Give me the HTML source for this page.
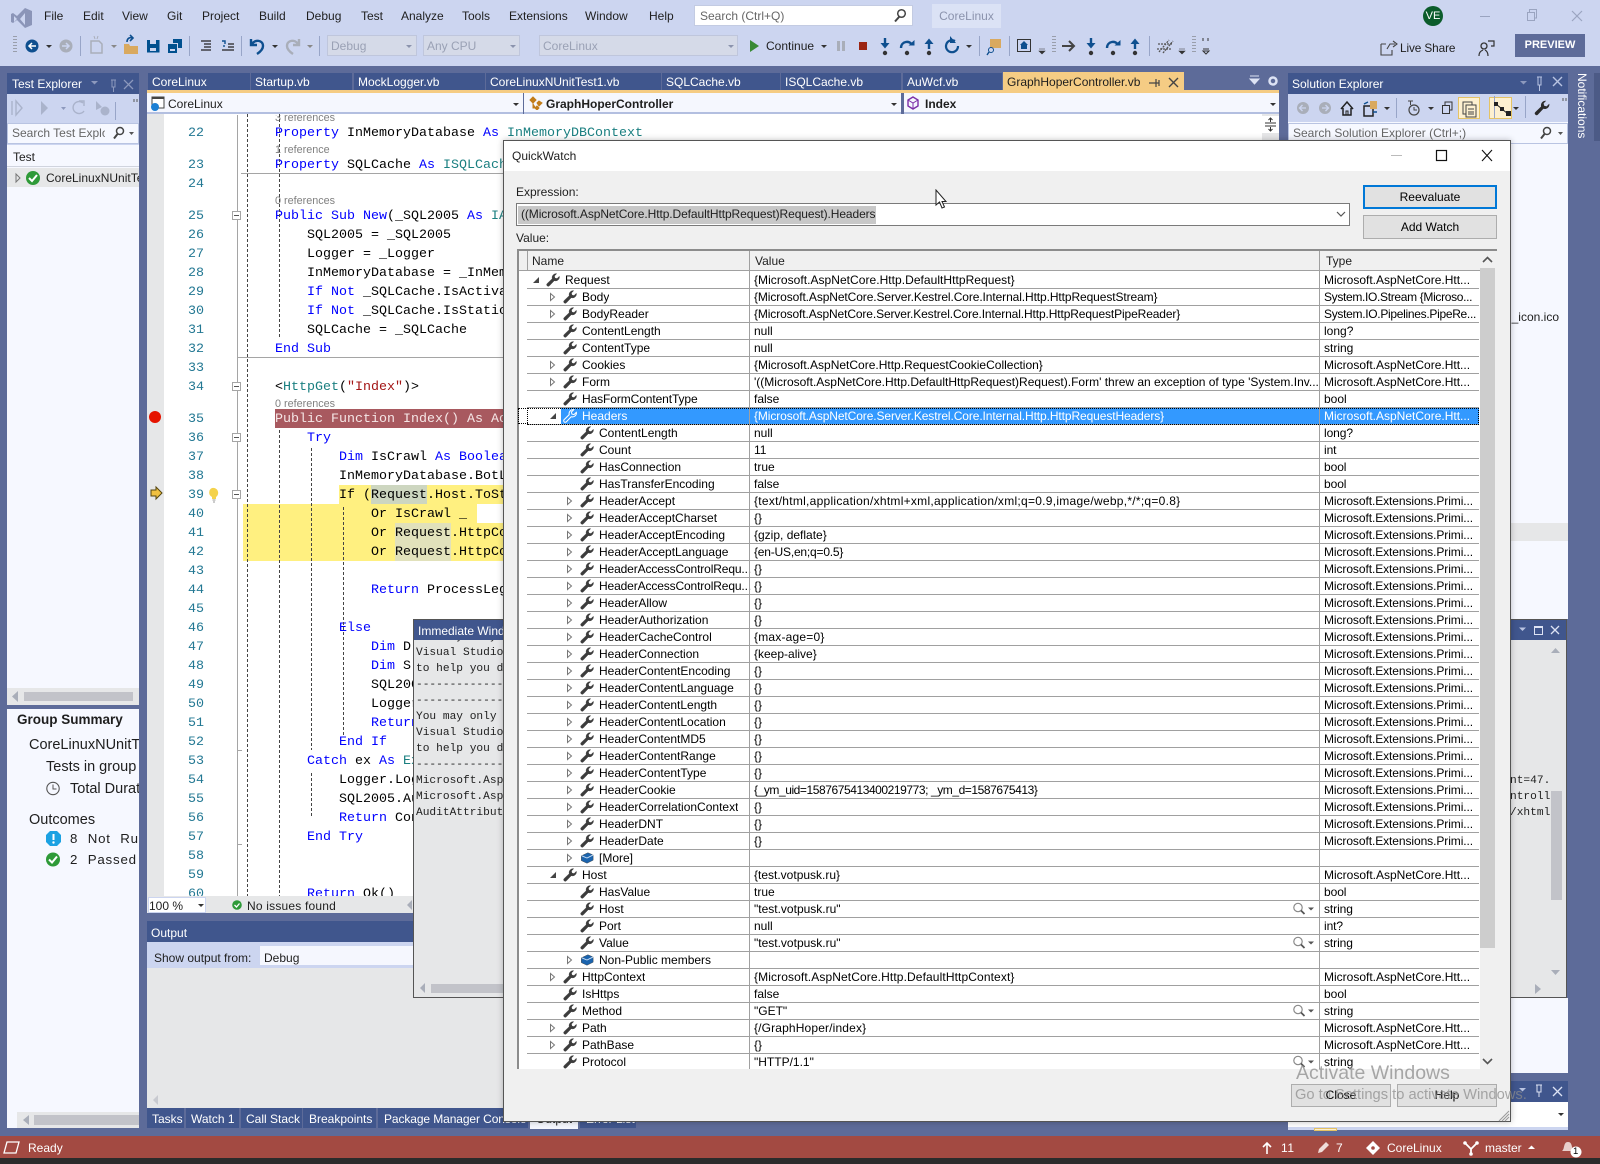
<!DOCTYPE html>
<html><head><meta charset="utf-8"><title>QuickWatch</title>
<style>
html,body{margin:0;padding:0;width:1600px;height:1164px;overflow:hidden;background:#5d6b99}
body{position:relative;font:12px/16px "Liberation Sans",sans-serif;color:#1e1e1e}
.a{position:absolute;white-space:nowrap}
.b{position:absolute}
.w1{color:#fff}
.dn{position:absolute;width:0;height:0;border-left:3px solid transparent;border-right:3px solid transparent;border-top:3px solid #333}
.tab{position:absolute;top:73px;height:17px;background:#40568d;color:#fff;line-height:18px;white-space:nowrap;overflow:hidden}
.ln,.c{position:absolute;font:13.33px/19px "Liberation Mono",monospace;white-space:pre}
.ln{left:164px;width:40px;text-align:right;color:#237893;margin-top:2px}
.c{color:#000;margin-top:2px}
.k{color:#0000ff}.y{color:#1a7f80}.s{color:#a31515}
.cl{position:absolute;font-size:10.8px;line-height:12px;color:#808080;white-space:nowrap;margin-top:1px}
.im{position:absolute;left:416px;font:11.2px/16px "Liberation Mono",monospace;white-space:pre;color:#1e1e1e}
.bt{position:absolute;top:1108px;height:20px;background:#40568d;color:#fff;line-height:23px;white-space:nowrap;overflow:hidden;box-sizing:border-box;padding-left:6px}
.r{position:relative;height:16px;border-bottom:1px solid #a0a0a0;line-height:16px;color:#000}
.d0{--o:0px}.d1{--o:17px}.d2{--o:34px}
.r span{position:absolute;top:0;white-space:nowrap;overflow:hidden}
.n{left:calc(38px + var(--o))}
.v{left:227px;width:564px}
.t{left:797px;width:155px}
.d2 .t{letter-spacing:-.08px}
.lg{letter-spacing:-.13px}
.r svg{position:absolute}
.e{left:calc(5px + var(--o));top:0;width:8px;height:16px}
.w{left:calc(19px + var(--o));top:1px;width:14px;height:14px;fill:#3c3c3c;stroke:#3c3c3c;stroke-width:.5}
.m{left:765px;top:1px;width:24px;height:14px}
.sel{background:linear-gradient(90deg,#fff 0,#fff calc(17px + var(--o)),#3399ff calc(17px + var(--o)));color:#fff;outline:1px dotted #000;outline-offset:-1px}
.sel .w{fill:#3399ff;stroke:#fff;stroke-width:1.2}
.btn{position:absolute;box-sizing:border-box;background:#e1e1e1;border:1px solid #adadad;text-align:center;color:#000}
</style></head>
<body>
<svg width="0" height="0" style="position:absolute">
<defs>
<symbol id="wr" viewBox="0 0 16 16"><path d="M15.4 4.4a4.6 4.6 0 0 1-6 4.4L3.9 14.6a1.8 1.8 0 0 1-2.6-2.5l5.8-5.6A4.6 4.6 0 0 1 12.2.8L9.6 3.4l.6 2.4 2.4.6 2.6-2.6z"/></symbol>
<symbol id="ac" viewBox="0 0 8 16"><path d="M1.5 4.5l4 3.5-4 3.5z" fill="#fff" stroke="#777"/></symbol>
<symbol id="ae" viewBox="0 0 8 16"><path d="M7 5v6H1z" fill="#444"/></symbol>
<symbol id="cb" viewBox="0 0 16 16"><path d="M1.5 5.500L9 2l6 2.500v6L8 14l-6.500-3z" fill="#1b64ae"/><path d="M2 5.500l6 2.500 7-3.500" fill="none" stroke="#cfe2f7" stroke-width="1"/></symbol>
<symbol id="mg" viewBox="0 0 24 14"><circle cx="6" cy="5.500" r="4.200" fill="#fff" stroke="#8a8a8a" stroke-width="1.200"/><path d="M9 8.500l3.500 3.500" stroke="#555" stroke-width="1.800"/><path d="M16 5.500h6l-3 3z" fill="#555"/></symbol>
<symbol id="si" viewBox="0 0 16 20"><path d="M8 0v8" stroke="#0e4f8f" stroke-width="2.400"/><path d="M3.500 5h9L8 10.500z" fill="#0e4f8f"/><circle cx="8" cy="15" r="2.200" fill="#333"/></symbol>
<symbol id="so" viewBox="0 0 16 20"><path d="M2 10C2 3 11 2 13 7" fill="none" stroke="#0e4f8f" stroke-width="2.400"/><path d="M9.500 7.500h6V2z" fill="#0e4f8f"/><circle cx="8" cy="15" r="2.200" fill="#333"/></symbol>
<symbol id="su" viewBox="0 0 16 20"><path d="M8 11V3" stroke="#0e4f8f" stroke-width="2.400"/><path d="M3.500 6h9L8 .5z" fill="#0e4f8f"/><circle cx="8" cy="15" r="2.200" fill="#333"/></symbol>
</defs>
</svg>

<!-- top chrome -->
<div class="b" style="left:0;top:0;width:1600px;height:66px;background:#ccd5f0"></div>
<svg class="b" style="left:0;top:0" width="1600" height="66">
<path d="M25 8l7 3v14l-7 3-8-8-4 3-2-1V14l2-1 4 3zM14 16v6l3-3zM25 13l-5 6 5 6z" fill="#8b95b8" fill-rule="evenodd"/>
<path d="M14 36v18M16 36v18" stroke="#666" stroke-dasharray="1 2"/>
<circle cx="32" cy="46" r="6.500" fill="#0e4f8f"/><path d="M36 46h-6M32 43l-3 3 3 3" stroke="#fff" stroke-width="1.500" fill="none"/>
<path d="M46 45h6l-3 3z" fill="#333"/>
<circle cx="66" cy="46" r="6.500" fill="#a9aeb9"/><path d="M62 46h6M66 43l3 3-3 3" stroke="#ccd5f0" stroke-width="1.500" fill="none"/>
<path d="M80.500 36v20M189.500 36v20M241.500 36v20M319.500 36v20M979.500 36v20M1009.500 36v20M1149.500 36v20" stroke="#98a5c8"/>
<path d="M91 41h8l3 3v9H91z" fill="none" stroke="#a9aeb9" stroke-width="1.500"/><path d="M94 36l1 3M98 36l-1 3" stroke="#a9aeb9"/>
<path d="M111 45h6l-3 3z" fill="#888"/>
<path d="M124 44h5l1 2h8v8h-14z" fill="#d9a95f"/><path d="M127 42c0-4 3-5 6-4M130 35l3 3-3 3" fill="none" stroke="#0e4f8f" stroke-width="1.600"/>
<path d="M147 40h12.500v12.500H147zM150 40v4h6v-4z" fill="#00508f" fill-rule="evenodd"/><rect x="150" y="48" width="6" height="3" fill="#ccd5f0"/>
<path d="M168 44h9v9h-9z" fill="#00508f"/><path d="M173 39h9v9h-4v-5h-5z" fill="#00508f"/><rect x="170" y="49" width="5" height="2" fill="#ccd5f0"/>
<path d="M201 41h10M204 44h7M204 47h7M201 50h10" stroke="#222" stroke-width="1.200"/>
<path d="M222 41h3v3M224 45v2" stroke="#0e4f8f" stroke-width="1.400" fill="none"/><path d="M228 44h6M228 47h6M222 50h12" stroke="#222" stroke-width="1.200"/>
<path d="M251 39v6h6M252 44c3-5 11-4 11 2 0 3-3 6-6 8" fill="none" stroke="#0e4f8f" stroke-width="2.400"/>
<path d="M272 45h6l-3 3z" fill="#333"/>
<path d="M299 39v6h-6M298 44c-3-5-11-4-11 2 0 3 3 6 6 8" fill="none" stroke="#a9aeb9" stroke-width="2.400"/>
<path d="M307 45h6l-3 3z" fill="#888"/>
<path d="M750 40l9 6-9 6z" fill="#388a34"/>
<path d="M821 45h6l-3 3z" fill="#333"/>
<rect x="837" y="41" width="3" height="10" fill="#a9aeb9"/><rect x="842" y="41" width="3" height="10" fill="#a9aeb9"/>
<rect x="859" y="42" width="8" height="8" fill="#9b2412"/>
<use href="#si" x="877" y="38" width="16" height="20"/><use href="#so" x="899" y="38" width="16" height="20"/><use href="#su" x="921" y="38" width="16" height="20"/>
<path d="M955 41a6 6 0 1 0 3 5" fill="none" stroke="#0e4f8f" stroke-width="2.200"/><path d="M950 36v7h6z" fill="#0e4f8f"/>
<path d="M966 45h6l-3 3z" fill="#333"/>
<rect x="990" y="39" width="11" height="9" fill="#d9a95f"/><circle cx="991" cy="50" r="2.500" fill="#ccd5f0" stroke="#0e4f8f"/><path d="M989 52l-2 3" stroke="#0e4f8f" stroke-width="1.400"/>
<rect x="1017.500" y="39.500" width="13" height="12" fill="none" stroke="#333"/><path d="M1024 41l4 4h-1v4h-6v-4h-1z" fill="#0e4f8f"/>
<path d="M1039 49h6M1039 51h6l-3 3z" stroke="#333" fill="#333" stroke-width=".6"/>
<path d="M1053 36v16M1055 36v16" stroke="#666" stroke-dasharray="1 2"/>
<path d="M1062 46h12M1069 41l5 5-5 5" fill="none" stroke="#444" stroke-width="2"/>
<use href="#si" x="1083" y="38" width="16" height="20"/><use href="#so" x="1105" y="38" width="16" height="20"/><use href="#su" x="1127" y="38" width="16" height="20"/>
<path d="M1159 52l10-12M1163 53l10-12M1158 44h14M1157 49h14" stroke="#555" stroke-width="1.300" stroke-dasharray="2 1"/>
<path d="M1179 49h6M1179 51h6l-3 3z" stroke="#333" fill="#333" stroke-width=".6"/>
<path d="M1193 36v16M1195 36v16" stroke="#666" stroke-dasharray="1 2"/>
<path d="M1203 38v3M1208 38v3M1203 49h6M1203 51h6l-3 3z" stroke="#333" fill="none"/>
<path d="M893 17a4.200 4.200 0 1 0 3-7 4.200 4.200 0 0 0-3 7l-2 3 1 1z M902 13.500a4.300 4.300 0 1 1-8.600 0" fill="none" stroke="#444" stroke-width="1.500" transform="translate(0 -1)"/>
<rect x="1480" y="16" width="10" height="1" fill="#9aa4c0"/>
<rect x="1527.500" y="12.500" width="7" height="8" fill="none" stroke="#9aa4c0"/><path d="M1529.500 12v-2.500h7V18h-2" fill="none" stroke="#9aa4c0"/>
<path d="M1572 11l10 10M1582 11l-10 10" stroke="#9aa4c0" stroke-width="1.200"/>
<path d="M1381 44h5M1381 44v11h11v-5M1387 49l3-5h5M1393 41l4 3-4 3" fill="none" stroke="#444" stroke-width="1.100"/>
<circle cx="1484" cy="46" r="3" fill="none" stroke="#333" stroke-width="1.300"/><path d="M1479 56c0-4 2-5 4-6M1488 56c0-3-1-5-3-6M1488 41h6v5h-3" fill="none" stroke="#333" stroke-width="1.200"/>
</svg>
<div class="a" style="left:44px;top:8px">File</div><div class="a" style="left:83px;top:8px">Edit</div><div class="a" style="left:122px;top:8px">View</div><div class="a" style="left:167px;top:8px">Git</div><div class="a" style="left:202px;top:8px">Project</div><div class="a" style="left:259px;top:8px">Build</div><div class="a" style="left:306px;top:8px">Debug</div><div class="a" style="left:361px;top:8px">Test</div><div class="a" style="left:401px;top:8px">Analyze</div><div class="a" style="left:462px;top:8px">Tools</div><div class="a" style="left:509px;top:8px">Extensions</div><div class="a" style="left:585px;top:8px">Window</div><div class="a" style="left:649px;top:8px">Help</div>
<div class="b" style="left:694px;top:5px;width:219px;height:21px;background:#fff;border:1px solid #c3cbe2;box-sizing:border-box"></div>
<div class="a" style="left:700px;top:8px;color:#666">Search (Ctrl+Q)</div>
<svg class="b" style="left:893px;top:8px" width="14" height="15"><circle cx="8.500" cy="5.500" r="3.800" fill="none" stroke="#444" stroke-width="1.500"/><path d="M6 9l-4 4.500" stroke="#444" stroke-width="2"/></svg>
<div class="a" style="left:932px;top:4px;width:69px;height:24px;background:#dbe2f5;color:#8b93ad;line-height:24px;text-align:center">CoreLinux</div>
<div class="a w1" style="left:1423px;top:6px;width:20px;height:20px;border-radius:50%;background:#0b5c2b;line-height:20px;text-align:center;font-size:11px">VE</div>
<div class="b" style="left:327px;top:35px;width:90px;height:21px;background:#d5dae8;border:1px solid #bfc6dc;box-sizing:border-box"></div>
<div class="a" style="left:331px;top:38px;color:#9aa1b5">Debug</div><div class="dn" style="left:406px;top:45px;border-top-color:#8b93ad"></div>
<div class="b" style="left:423px;top:35px;width:97px;height:21px;background:#d5dae8;border:1px solid #bfc6dc;box-sizing:border-box"></div>
<div class="a" style="left:427px;top:38px;color:#9aa1b5">Any CPU</div><div class="dn" style="left:523px;top:45px;border-top-color:#8b93ad;margin-left:-13px"></div>
<div class="b" style="left:539px;top:35px;width:199px;height:21px;background:#d5dae8;border:1px solid #bfc6dc;box-sizing:border-box"></div>
<div class="a" style="left:543px;top:38px;color:#9aa1b5">CoreLinux</div><div class="dn" style="left:728px;top:45px;border-top-color:#8b93ad"></div>
<div class="a" style="left:766px;top:38px">Continue</div>
<div class="a" style="left:1400px;top:40px;letter-spacing:-.1px;font-size:11.800px">Live Share</div>
<div class="a w1" style="left:1515px;top:34px;width:70px;height:23px;background:#5d6b99;line-height:23px;text-align:center;font-weight:bold;font-size:11px">PREVIEW</div>

<!-- Test Explorer -->
<div class="b" style="left:7px;top:73px;width:132px;height:632px;background:#f6f8ff"></div>
<div class="b" style="left:7px;top:73px;width:132px;height:21px;background:#40568d"></div>
<div class="a w1" style="left:12px;top:76px">Test Explorer</div>
<div class="b" style="left:7px;top:94px;width:132px;height:51px;background:#ccd5f0"></div>
<svg class="b" style="left:7px;top:73px" width="132" height="50">
<path d="M84 8h7l-3.500 3.500z" fill="#8d99bd"/><path d="M104 7h5M105 7v7h3V7M106.500 14v5" stroke="#8d99bd" fill="none"/><path d="M117 7l9 9M126 7l-9 9" stroke="#8d99bd" stroke-width="1.300"/>
<path d="M9 28l6 7-6 7zM5 28v14" fill="none" stroke="#aab3cb" stroke-width="1.400"/><path d="M34 28l7 7-7 7z" fill="#aab3cb"/><path d="M54 34h5l-2.500 3z" fill="#8d99bd"/>
<path d="M76 30a6 6 0 1 0 1 8M72 28h5v5" fill="none" stroke="#aab3cb" stroke-width="1.400"/>
<path d="M89 28l6 6-6 3z" fill="#aab3cb"/><circle cx="98" cy="38" r="4.500" fill="#aab3cb"/><path d="M108.500 29v18" stroke="#98a5c8"/><path d="M127 26v3M130 26v3" stroke="#555"/>
</svg>
<div class="b" style="left:7px;top:123px;width:132px;height:21px;background:#f6f8ff;border:1px solid #b9c4e2;box-sizing:border-box"></div>
<div class="a" style="left:12px;top:125px;width:93px;overflow:hidden;color:#666">Search Test Explorer</div>
<svg class="b" style="left:111px;top:125px" width="26" height="16"><circle cx="9" cy="6" r="3.500" fill="none" stroke="#444" stroke-width="1.500"/><path d="M6.500 9L3 13.500" stroke="#444" stroke-width="2"/><path d="M18 7h5l-2.500 3z" fill="#555"/></svg>
<div class="b" style="left:7px;top:145px;width:132px;height:22px;background:#f6f8ff;border-bottom:1px solid #d0d4de;box-sizing:border-box"></div>
<div class="a" style="left:13px;top:149px">Test</div>
<div class="b" style="left:7px;top:168px;width:132px;height:19px;background:#e6e7e8"></div>
<svg class="b" style="left:14px;top:171px" width="28" height="14"><path d="M2 3l4 4-4 4z" fill="none" stroke="#777"/><circle cx="19" cy="7" r="7" fill="#2e9a38"/><path d="M15 7l3 3 5-6" fill="none" stroke="#fff" stroke-width="2"/></svg>
<div class="a" style="left:46px;top:170px;width:93px;overflow:hidden">CoreLinuxNUnitTest1</div>
<div class="b" style="left:7px;top:688px;width:132px;height:17px;background:#e6e7e8"></div>
<div class="b" style="left:24px;top:692px;width:109px;height:9px;background:#c2c3c9"></div>
<svg class="b" style="left:12px;top:691px" width="8" height="11"><path d="M6 0v11L0 5.500z" fill="#a9aeb9"/></svg>

<!-- Group Summary -->
<div class="b" style="left:7px;top:709px;width:132px;height:419px;background:#f6f8ff;overflow:hidden"></div>
<div class="a" style="left:17px;top:712px;font-weight:bold;font-size:13.500px">Group Summary</div>
<div class="a" style="left:29px;top:737px;width:110px;overflow:hidden;font-size:14.500px">CoreLinuxNUnitTest1</div>
<div class="a" style="left:46px;top:759px;width:93px;overflow:hidden;font-size:14.500px">Tests in group</div>
<div class="a" style="left:70px;top:781px;width:69px;overflow:hidden;font-size:14.500px">Total Duration</div>
<div class="a" style="left:29px;top:812px;font-size:14.500px">Outcomes</div>
<div class="a" style="left:70px;top:831px;width:69px;overflow:hidden;font-size:13.300px;letter-spacing:.8px;word-spacing:5px">8 Not Run</div>
<div class="a" style="left:70px;top:852px;width:69px;overflow:hidden;font-size:13.300px;letter-spacing:.8px;word-spacing:5px">2 Passed</div>
<svg class="b" style="left:46px;top:781px" width="15" height="15"><circle cx="7" cy="7.500" r="6.200" fill="none" stroke="#555" stroke-width="1.100"/><path d="M7 3.500v4.500h3.500" fill="none" stroke="#555"/></svg>
<svg class="b" style="left:46px;top:831px" width="15" height="36"><path d="M4 0h7l4 4v7l-4 4H4L0 11V4z" fill="#1ba1e2"/><path d="M7.500 3v6" stroke="#fff" stroke-width="2"/><circle cx="7.500" cy="11.500" r="1.200" fill="#fff"/><circle cx="7" cy="28.500" r="7" fill="#2e9a38"/><path d="M3 28.500l3 3 5-6" fill="none" stroke="#fff" stroke-width="2"/></svg>
<div class="b" style="left:17px;top:1112px;width:122px;height:16px;background:#e6e7e8"></div>
<div class="b" style="left:34px;top:1115px;width:105px;height:10px;background:#c2c3c9"></div>
<svg class="b" style="left:23px;top:1115px" width="7" height="11"><path d="M6 0v10L0 5z" fill="#a9aeb9"/></svg>

<!-- document well -->
<div class="tab" style="left:148px;width:102px;padding-left:4px;box-sizing:border-box">CoreLinux</div>
<div class="tab" style="left:251px;width:101px;padding-left:4px;box-sizing:border-box">Startup.vb</div>
<div class="tab" style="left:354px;width:131px;padding-left:4px;box-sizing:border-box">MockLogger.vb</div>
<div class="tab" style="left:486px;width:175px;padding-left:4px;box-sizing:border-box">CoreLinuxNUnitTest1.vb</div>
<div class="tab" style="left:662px;width:118px;padding-left:4px;box-sizing:border-box">SQLCache.vb</div>
<div class="tab" style="left:781px;width:120px;padding-left:4px;box-sizing:border-box">ISQLCache.vb</div>
<div class="tab" style="left:903px;width:99px;padding-left:4px;box-sizing:border-box">AuWcf.vb</div>
<div class="tab" style="left:1003px;top:72px;height:19px;width:181px;padding-left:4px;box-sizing:border-box;background:#f5cc84;color:#1e1e1e;line-height:20px">GraphHoperController.vb</div>
<svg class="b" style="left:1148px;top:75px" width="34" height="15"><path d="M4 8h7M8 4v8M11 5v6M1 8h3" fill="none" stroke="#444" stroke-width="1.200"/><path d="M21 3l9 9M30 3l-9 9" stroke="#444" stroke-width="1.400"/></svg>
<svg class="b" style="left:1248px;top:74px" width="34" height="14"><path d="M2 2h9M2 5h9l-4.500 5z" stroke="#dde3f4" fill="#dde3f4" stroke-width="1"/><circle cx="25" cy="7" r="3.500" fill="none" stroke="#dde3f4" stroke-width="2.500"/></svg>
<div class="b" style="left:147px;top:90px;width:1132px;height:3px;background:#f5cc84"></div>
<div class="b" style="left:147px;top:93px;width:376px;height:21px;background:#f5f7fe;border-bottom:2px solid #b3bfe0;box-sizing:border-box"></div>
<div class="b" style="left:524px;top:93px;width:377px;height:21px;background:#f5f7fe;border-bottom:2px solid #b3bfe0;box-sizing:border-box"></div>
<div class="b" style="left:904px;top:93px;width:375px;height:21px;background:#f5f7fe;border-bottom:2px solid #b3bfe0;box-sizing:border-box"></div>
<svg class="b" style="left:150px;top:96px" width="16" height="16"><rect x="2" y="1" width="12" height="11" fill="#fff" stroke="#444"/><rect x="2" y="1" width="12" height="2" fill="#444"/><circle cx="5" cy="11" r="4" fill="#1b7fd4"/></svg>
<div class="a" style="left:168px;top:96px">CoreLinux</div><div class="dn" style="left:513px;top:103px"></div>
<svg class="b" style="left:529px;top:96px" width="14" height="14"><path d="M4 1l3 3-3 3-3-3zM10 5l3 2-3 3-2-3zM8 10l2 2-2 2-2-2zM4 7v5h3" fill="#c27d1a" stroke="#c27d1a"/></svg>
<div class="a" style="left:546px;top:96px;font-weight:bold">GraphHoperController</div><div class="dn" style="left:891px;top:103px"></div>
<svg class="b" style="left:907px;top:96px" width="12" height="14"><path d="M6 1l5 3v6l-5 3-5-3V4z" fill="none" stroke="#7b2ea8" stroke-width="1.400"/><path d="M1 4l5 3 5-3M6 7v6" fill="none" stroke="#7b2ea8"/></svg>
<div class="a" style="left:925px;top:96px;font-weight:bold">Index</div><div class="dn" style="left:1270px;top:103px"></div>

<!-- editor -->
<div class="b" style="left:147px;top:114px;width:1132px;height:782px;background:#fff"></div>
<div class="b" style="left:147px;top:114px;width:17px;height:782px;background:#e6e7e8"></div>
<div class="b" style="left:1262px;top:114px;width:17px;height:782px;background:#e6e7e8"></div>
<div class="b" style="left:1262px;top:116px;width:17px;height:17px;background:#fff"></div>
<svg class="b" style="left:1263px;top:117px" width="15" height="16"><path d="M7.500 1v4M2 6h11M2 9h11M7.500 14v-4" stroke="#333" fill="none"/><path d="M5.500 3l2-2 2 2M5.500 12l2 2 2-2" fill="none" stroke="#333"/></svg>
<div class="b" style="left:243px;top:504px;width:260px;height:57px;background:#fff080"></div>
<div class="b" style="left:339px;top:485px;width:164px;height:19px;background:#fff080"></div>
<div class="b" style="left:477px;top:504px;width:26px;height:19px;background:#fff"></div>
<div class="b" style="left:371px;top:485px;width:56px;height:19px;background:#cdd6c0"></div>
<div class="b" style="left:395px;top:523px;width:56px;height:38px;background:#e1e1bb"></div>
<div class="b" style="left:275px;top:409px;width:230px;height:19px;background:#a8595f"></div>

<div class="cl" style="left:275px;top:111px;clip-path:inset(3px 0 0 0)">3 references</div>
<div class="cl" style="left:275px;top:143px">1 reference</div>
<div class="cl" style="left:275px;top:194px">0 references</div>
<div class="cl" style="left:275px;top:397px">0 references</div>

<div class="ln" style="top:122px">22</div><div class="ln" style="top:154px">23</div><div class="ln" style="top:173px">24</div><div class="ln" style="top:205px">25</div><div class="ln" style="top:224px">26</div><div class="ln" style="top:243px">27</div><div class="ln" style="top:262px">28</div><div class="ln" style="top:281px">29</div><div class="ln" style="top:300px">30</div><div class="ln" style="top:319px">31</div><div class="ln" style="top:338px">32</div><div class="ln" style="top:357px">33</div><div class="ln" style="top:376px">34</div><div class="ln" style="top:408px">35</div><div class="ln" style="top:427px">36</div><div class="ln" style="top:446px">37</div><div class="ln" style="top:465px">38</div><div class="ln" style="top:484px">39</div><div class="ln" style="top:503px">40</div><div class="ln" style="top:522px">41</div><div class="ln" style="top:541px">42</div><div class="ln" style="top:560px">43</div><div class="ln" style="top:579px">44</div><div class="ln" style="top:598px">45</div><div class="ln" style="top:617px">46</div><div class="ln" style="top:636px">47</div><div class="ln" style="top:655px">48</div><div class="ln" style="top:674px">49</div><div class="ln" style="top:693px">50</div><div class="ln" style="top:712px">51</div><div class="ln" style="top:731px">52</div><div class="ln" style="top:750px">53</div><div class="ln" style="top:769px">54</div><div class="ln" style="top:788px">55</div><div class="ln" style="top:807px">56</div><div class="ln" style="top:826px">57</div><div class="ln" style="top:845px">58</div><div class="ln" style="top:864px">59</div><div class="ln" style="top:883px">60</div>

<div class="c" style="left:275px;top:122px"><span class="k">Property</span> InMemoryDatabase <span class="k">As</span> <span class="y">InMemoryDBContext</span></div>
<div class="c" style="left:275px;top:154px"><span class="k">Property</span> SQLCache <span class="k">As</span> <span class="y">ISQLCache</span></div>
<div class="c" style="left:275px;top:205px"><span class="k">Public Sub New</span>(_SQL2005 <span class="k">As</span> <span class="y">IAuditDb</span></div>
<div class="c" style="left:307px;top:224px">SQL2005 = _SQL2005</div>
<div class="c" style="left:307px;top:243px">Logger = _Logger</div>
<div class="c" style="left:307px;top:262px">InMemoryDatabase = _InMemoryDatabase</div>
<div class="c" style="left:307px;top:281px"><span class="k">If Not</span> _SQLCache.IsActivated</div>
<div class="c" style="left:307px;top:300px"><span class="k">If Not</span> _SQLCache.IsStatic</div>
<div class="c" style="left:307px;top:319px">SQLCache = _SQLCache</div>
<div class="c" style="left:275px;top:338px"><span class="k">End Sub</span></div>
<div class="c" style="left:275px;top:376px">&lt;<span class="y">HttpGet</span>(<span class="s">"Index"</span>)&gt;</div>
<div class="c" style="left:275px;top:408px;color:#f5e6e6">Public Function Index() As ActionResult</div>
<div class="c" style="left:307px;top:427px"><span class="k">Try</span></div>
<div class="c" style="left:339px;top:446px"><span class="k">Dim</span> IsCrawl <span class="k">As Boolean</span></div>
<div class="c" style="left:339px;top:465px">InMemoryDatabase.BotList</div>
<div class="c" style="left:339px;top:484px">If (Request.Host.ToString</div>
<div class="c" style="left:371px;top:503px">Or IsCrawl _</div>
<div class="c" style="left:371px;top:522px">Or Request.HttpContext</div>
<div class="c" style="left:371px;top:541px">Or Request.HttpContext</div>
<div class="c" style="left:371px;top:579px"><span class="k">Return</span> ProcessLegacy</div>
<div class="c" style="left:339px;top:617px"><span class="k">Else</span></div>
<div class="c" style="left:371px;top:636px"><span class="k">Dim</span> D</div>
<div class="c" style="left:371px;top:655px"><span class="k">Dim</span> S</div>
<div class="c" style="left:371px;top:674px">SQL2005</div>
<div class="c" style="left:371px;top:693px">Logger</div>
<div class="c" style="left:371px;top:712px"><span class="k">Return</span></div>
<div class="c" style="left:339px;top:731px"><span class="k">End If</span></div>
<div class="c" style="left:307px;top:750px"><span class="k">Catch</span> ex <span class="k">As</span> <span class="y">Exception</span></div>
<div class="c" style="left:339px;top:769px">Logger.Log</div>
<div class="c" style="left:339px;top:788px">SQL2005.Audit</div>
<div class="c" style="left:339px;top:807px"><span class="k">Return</span> Content</div>
<div class="c" style="left:307px;top:826px"><span class="k">End Try</span></div>
<div class="c" style="left:307px;top:883px"><span class="k">Return</span> Ok()</div>

<svg class="b" style="left:147px;top:114px" width="360" height="782">
<path d="M90.500 1v781" stroke="#a5a5a5"/>
<path d="M94 59.500h266M91 243.500h269" stroke="#a5a5a5"/>
<path d="M100.500 0v782M132.500 0v224M132.500 316v466M164.500 334v302M164.500 659v45M196.500 393v230" stroke="#444" stroke-dasharray="3 2" fill="none"/>
<path d="M91 636.500h4M91 730.500h4" stroke="#a5a5a5"/>
<g fill="#fff" stroke="#a5a5a5"><rect x="85.500" y="97.500" width="8" height="8"/><rect x="85.500" y="268.500" width="8" height="8"/><rect x="85.500" y="319.500" width="8" height="8"/><rect x="85.500" y="376.500" width="8" height="8"/></g>
<path d="M87 101.500h5M87 272.500h5M87 323.500h5M87 380.500h5" stroke="#555"/>
<circle cx="8" cy="303" r="6" fill="#e51400"/>
<path d="M4 376h5v-3l6 6-6 6v-3H4z" fill="#f0c040" stroke="#55460f"/>
<path d="M65 374a5 5 0 0 1 4 9v2h-4v-2a5 5 0 0 1 0-9z" fill="#f4d24c"/><path d="M65.500 386h3M66 388h2" stroke="#999"/>
</svg>
<div class="b" style="left:147px;top:896px;width:1132px;height:17px;background:#e6e7e8"></div>
<div class="b" style="left:148px;top:897px;width:58px;height:16px;background:#fff;box-sizing:border-box;border:1px solid #ccd5f0"></div>
<div class="a" style="left:149px;top:898px">100 %</div><div class="dn" style="left:198px;top:904px"></div>
<svg class="b" style="left:232px;top:900px" width="10" height="10"><circle cx="5" cy="5" r="4.800" fill="#2e9a38"/><path d="M2.500 5l2 2 3-3.500" fill="none" stroke="#fff" stroke-width="1.300"/></svg>
<div class="a" style="left:247px;top:898px;letter-spacing:.2px">No issues found</div>
<svg class="b" style="left:407px;top:900px" width="6" height="10"><path d="M5 0v10L0 5z" fill="#a9aeb9"/></svg>

<!-- Output panel -->
<div class="b" style="left:147px;top:921px;width:1132px;height:187px;background:#e6e7e8"></div>
<div class="b" style="left:147px;top:921px;width:1132px;height:21px;background:#40568d"></div>
<div class="a w1" style="left:151px;top:925px">Output</div>
<div class="b" style="left:147px;top:942px;width:1132px;height:26px;background:#ccd5f0"></div>
<div class="a" style="left:154px;top:950px">Show output from:</div>
<div class="b" style="left:260px;top:946px;width:300px;height:19px;background:#f5f7fe"></div>
<div class="a" style="left:264px;top:950px">Debug</div>
<svg class="b" style="left:153px;top:1095px" width="6" height="10"><path d="M5 0v10L0 5z" fill="#c8cad0"/></svg>
<div class="bt" style="left:147px;width:37px;padding-left:5px">Tasks</div>
<div class="bt" style="left:186px;width:53px;padding-left:5px">Watch 1</div>
<div class="bt" style="left:241px;width:61px;padding-left:5px">Call Stack</div>
<div class="bt" style="left:303px;width:73px">Breakpoints</div>
<div class="bt" style="left:378px;width:150px;letter-spacing:-.1px">Package Manager Console</div>
<div class="bt" style="left:530px;width:48px;height:21px;background:#f5f7fe;color:#1e1e1e">Output</div>
<div class="bt" style="left:580px;width:56px">Error List</div>

<!-- solution explorer -->
<div class="b" style="left:1288px;top:73px;width:280px;height:546px;background:#f6f8ff"></div>
<div class="b" style="left:1288px;top:73px;width:280px;height:21px;background:#40568d"></div>
<div class="a w1" style="left:1292px;top:76px">Solution Explorer</div>
<div class="b" style="left:1288px;top:94px;width:280px;height:28px;background:#ccd5f0"></div>
<div class="b" style="left:1458px;top:97px;width:22px;height:22px;background:#fdf0d0;border:1px solid #e5c365;box-sizing:border-box"></div>
<div class="b" style="left:1489px;top:97px;width:23px;height:22px;background:#fdf0d0;border:1px solid #e5c365;box-sizing:border-box"></div>
<svg class="b" style="left:1280px;top:66px" width="320" height="80">
<path d="M240 15h7l-3.500 3.500z" fill="#8d99bd"/><path d="M257 11h5M258 11v8h3v-8M259.500 19v6" stroke="#b9c4e2" fill="none"/><path d="M273 11l9 9M282 11l-9 9" stroke="#b9c4e2" stroke-width="1.400"/>
<circle cx="23" cy="42" r="6" fill="#a9aeb9"/><path d="M26 42h-6M22.500 39l-3 3 3 3" stroke="#ccd5f0" fill="none" stroke-width="1.300"/>
<circle cx="45" cy="42" r="6" fill="#a9aeb9"/><path d="M42 42h6M45.500 39l3 3-3 3" stroke="#ccd5f0" fill="none" stroke-width="1.300"/>
<path d="M61 43l6-7 6 7M63 42v7h8v-7" fill="none" stroke="#222" stroke-width="1.500"/><path d="M66 49v-4h2v4" stroke="#222" fill="none"/>
<rect x="84" y="40" width="9" height="10" fill="none" stroke="#222" stroke-width="1.500"/><rect x="90" y="35" width="7" height="8" fill="#d9a95f"/><path d="M84 38l4-2M93 46h4" stroke="#0e4f8f" stroke-width="1.400"/>
<path d="M104 41h6l-3 3zM148 41h6l-3 3z" fill="#333"/><path d="M116.500 32v20" stroke="#98a5c8"/>
<circle cx="134" cy="44" r="5" fill="none" stroke="#444" stroke-width="1.200"/><path d="M134 41v3h3M128 35h5M130.500 35v4" stroke="#444" fill="none"/>
<rect x="162.500" y="39.500" width="7" height="8" fill="none" stroke="#333"/><path d="M165 39v-3h7v8h-2" fill="none" stroke="#333"/>
<rect x="183" y="36" width="9" height="12" fill="none" stroke="#444"/><rect x="186" y="39" width="10" height="12" fill="#fdf0d0" stroke="#444"/><path d="M188 43h6M188 46h6M188 48h6" stroke="#444"/>
<path d="M214.500 30v22M245.500 30v22" stroke="#98a5c8"/>
<g transform="translate(30 0)"><rect x="184" y="36" width="4" height="4" fill="#222"/><rect x="190" y="41" width="4" height="4" fill="#222"/><rect x="196" y="45" width="5" height="5" fill="#222"/><path d="M186 38l6 5 6 5" stroke="#222" fill="none"/></g>
<path d="M233 41h6l-3 3z" fill="#333"/>
<use href="#wr" x="254" y="34" width="16" height="16" fill="#2b2b2b"/>
<path d="M283 32v3M286 32v3" stroke="#555"/>
</svg>
<div class="b" style="left:1288px;top:123px;width:280px;height:21px;background:#f6f8ff;border:1px solid #b9c4e2;box-sizing:border-box"></div>
<div class="a" style="left:1293px;top:125px;color:#666">Search Solution Explorer (Ctrl+;)</div>
<svg class="b" style="left:1538px;top:125px" width="28" height="16"><circle cx="9" cy="6" r="3.500" fill="none" stroke="#444" stroke-width="1.500"/><path d="M6.500 9L3 13.500" stroke="#444" stroke-width="2"/><path d="M20 7h5l-2.500 3z" fill="#555"/></svg>
<div class="a" style="right:41px;top:309px">d_icon.ico</div>
<div class="b" style="left:1400px;top:523px;width:168px;height:18px;background:#e6e7e8"></div>
<div class="a w1" style="left:1574px;top:73px;writing-mode:vertical-rl;font-size:12px;line-height:16px">Notifications</div>
<div class="b" style="left:1594px;top:73px;width:6px;height:68px;background:#4c5a86"></div>

<!-- lower right -->
<div class="b" style="left:1288px;top:998px;width:280px;height:75px;background:#f6f8ff"></div>
<div class="b" style="left:1288px;top:1081px;width:280px;height:21px;background:#40568d"></div>
<div class="b" style="left:1288px;top:1102px;width:280px;height:25px;background:#fff"></div>
<div class="b" style="left:1288px;top:1127px;width:280px;height:3px;background:#ccd5f0"></div>
<div class="b" style="left:1314px;top:1128px;width:23px;height:3px;background:#fdf0d0;border:1px solid #e5c365;box-sizing:border-box"></div>
<div class="dn" style="left:1558px;top:1113px"></div>
<svg class="b" style="left:1510px;top:1081px" width="58" height="21"><path d="M9 7h7l-3.500 3.500z" fill="#b9c4e2"/><path d="M26 4h6M27 4v7h4V4M29 11v5" stroke="#dde3f4" fill="none"/><path d="M43 6l9 9M52 6l-9 9" stroke="#dde3f4" stroke-width="1.300"/></svg>

<!-- immediate window -->
<div class="b" style="left:413px;top:619px;width:1154px;height:379px;background:#e6e7e8;border:1px solid #555;box-sizing:border-box"></div>
<div class="im" style="top:629px">You may only use the Immediate Window</div>
<div class="b" style="left:414px;top:620px;width:1152px;height:20px;background:#40568d"></div>
<div class="a w1" style="left:418px;top:623px">Immediate Window</div>
<div class="im" style="top:645px">Visual Studio</div>
<div class="im" style="top:661px">to help you debug</div>
<div class="im" style="top:677px">-----------------------</div>
<div class="im" style="top:693px">-----------------------</div>
<div class="im" style="top:709px">You may only use</div>
<div class="im" style="top:725px">Visual Studio</div>
<div class="im" style="top:741px">to help you debug</div>
<div class="im" style="top:757px">-----------------------</div>
<div class="im" style="top:773px">Microsoft.AspNetCore</div>
<div class="im" style="top:789px">Microsoft.AspNetCore</div>
<div class="im" style="top:805px">AuditAttribute</div>
<div class="im" style="left:1510px;top:773px;width:42px;overflow:hidden">nt=47.</div>
<div class="im" style="left:1510px;top:789px;width:40px;overflow:hidden">ntroll</div>
<div class="im" style="left:1510px;top:805px;width:40px;overflow:hidden">/xhtml</div>
<div class="b" style="left:431px;top:984px;width:90px;height:9px;background:#c2c3c9"></div>
<svg class="b" style="left:420px;top:983px" width="6" height="11"><path d="M5 0v10L0 5z" fill="#a9aeb9"/></svg>
<div class="b" style="left:1551px;top:791px;width:11px;height:109px;background:#c2c3c9"></div>
<svg class="b" style="left:1510px;top:620px" width="56" height="380"><path d="M9 7.500h7L12.500 11z" fill="#b9c4e2"/><rect x="24.500" y="6.500" width="8" height="8" fill="none" stroke="#dde3f4"/><path d="M24 7h9" stroke="#dde3f4" stroke-width="2"/><path d="M41 6l8 8M49 6l-8 8" stroke="#dde3f4" stroke-width="1.300"/><path d="M41 33h9l-4.500-5z" fill="#a9aeb9"/><path d="M41 350h9l-4.500 5z" fill="#a9aeb9"/><path d="M25 364v10l6-5z" fill="#a9aeb9"/></svg>

<!-- status bar -->
<div class="b" style="left:0;top:1136px;width:1600px;height:22px;background:#a34a42"></div>
<div class="b" style="left:0;top:1158px;width:1600px;height:6px;background:#2b2b2b"></div>
<div class="a w1" style="left:28px;top:1140px">Ready</div>
<svg class="b" style="left:0;top:1137px" width="1600" height="22">
<path d="M7 5h12l-3 11H4z" fill="none" stroke="#fff" stroke-width="1.300"/>
<path d="M1267 17V6M1263 10l4-4 4 4" fill="none" stroke="#fff" stroke-width="1.600"/>
<path d="M1318 16l1-4 7-7 3 3-7 7z" fill="#f0dcd9"/>
<path d="M1373 4l7 7-7 7-7-7z" fill="#fff"/><circle cx="1373" cy="11" r="1.800" fill="#a34a42"/>
<path d="M1465 6l6 6 6-6M1471 12v5" fill="none" stroke="#fff" stroke-width="1.800"/><circle cx="1465" cy="6" r="1.800" fill="#fff"/><circle cx="1477" cy="6" r="1.800" fill="#fff"/><circle cx="1471" cy="17" r="1.800" fill="#fff"/>
<path d="M1528 12h7l-3.500-3.500z" fill="#fff"/>
<path d="M1562 14c3-2 1-9 6-9s3 7 6 9z" fill="#e8cfcb"/>
<circle cx="1576" cy="15" r="5.500" fill="#fff"/>
</svg>
<div class="a w1" style="left:1281px;top:1140px;letter-spacing:.6px">11</div>
<div class="a w1" style="left:1336px;top:1140px">7</div>
<div class="a w1" style="left:1387px;top:1140px">CoreLinux</div>
<div class="a w1" style="left:1485px;top:1140px">master</div>
<div class="a" style="left:1573px;top:1144px;color:#000;font-size:9.500px;line-height:16px">1</div>

<!-- QuickWatch dialog -->
<div class="b" style="left:503px;top:140px;width:1008px;height:982px;background:#f0f0f0;border:1px solid #555;box-sizing:border-box;box-shadow:0 0 6px rgba(0,0,0,.25)"></div>
<div class="b" style="left:504px;top:141px;width:1006px;height:30px;background:#fff"></div>
<div class="a" style="left:512px;top:148px">QuickWatch</div>
<svg class="b" style="left:1390px;top:146px" width="110" height="20"><path d="M1 9.500h11" stroke="#bbb"/><rect x="46.500" y="4.500" width="10" height="10" fill="none" stroke="#111" stroke-width="1.200"/><path d="M92 4l10 11M102 4L92 15" stroke="#111" stroke-width="1.100"/></svg>
<div class="a" style="left:516px;top:184px">Expression:</div>
<div class="b" style="left:516px;top:203px;width:834px;height:23px;background:#fff;border:1px solid #7a7a7a;box-sizing:border-box"></div>
<div class="a" style="left:518px;top:206px;width:358px;height:18px;background:#c8c8c8;line-height:17px;text-indent:3px;letter-spacing:-.09px;overflow:hidden">((Microsoft.AspNetCore.Http.DefaultHttpRequest)Request).Headers</div>
<svg class="b" style="left:1336px;top:211px" width="11" height="7"><path d="M1 1l4 4 4-4" fill="none" stroke="#555" stroke-width="1.200"/></svg>
<div class="btn" style="left:1363px;top:185px;width:134px;height:24px;border:2px solid #0078d7;line-height:20px">Reevaluate</div>
<div class="btn" style="left:1363px;top:215px;width:134px;height:24px;line-height:22px">Add Watch</div>
<div class="a" style="left:516px;top:230px">Value:</div>

<!-- grid -->
<div class="b" style="left:517px;top:249px;width:980px;height:820px;background:#fff;border-top:2px solid #8c8c8c;border-left:2px solid #8c8c8c;box-sizing:border-box"></div>
<div class="b" style="left:519px;top:251px;width:961px;height:20px;background:#f0f0f0;border-bottom:1px solid #a0a0a0;box-sizing:border-box"></div>
<div class="b" style="left:527px;top:251px;width:1px;height:19px;background:#a0a0a0"></div>
<div class="b" style="left:749px;top:251px;width:1px;height:21px;background:#a0a0a0"></div>
<div class="b" style="left:1319px;top:251px;width:1px;height:21px;background:#a0a0a0"></div>
<div class="a" style="left:532px;top:253px">Name</div><div class="a" style="left:755px;top:253px">Value</div><div class="a" style="left:1326px;top:253px">Type</div>
<div class="b" style="left:1480px;top:251px;width:17px;height:818px;background:#f0f0f0"></div>
<div class="b" style="left:1480px;top:268px;width:15px;height:680px;background:#cdcdcd"></div>
<svg class="b" style="left:1482px;top:256px" width="11" height="8"><path d="M1 6l4.500-4.500L10 6" fill="none" stroke="#555" stroke-width="1.600"/></svg>
<svg class="b" style="left:1482px;top:1057px" width="11" height="8"><path d="M1 2l4.500 4.500L10 2" fill="none" stroke="#555" stroke-width="1.600"/></svg>

<div class="b" style="left:527px;top:272px;width:952px;height:797px;overflow:hidden">
<div class="r d0"><svg class="e"><use href="#ae"/></svg><svg class="w"><use href="#wr"/></svg><span class="n">Request</span><span class="v" style="letter-spacing:.04px">{Microsoft.AspNetCore.Http.DefaultHttpRequest}</span><span class="t">Microsoft.AspNetCore.Htt...</span></div>
<div class="r d1"><svg class="e"><use href="#ac"/></svg><svg class="w"><use href="#wr"/></svg><span class="n">Body</span><span class="v" style="letter-spacing:-.1px">{Microsoft.AspNetCore.Server.Kestrel.Core.Internal.Http.HttpRequestStream}</span><span class="t" style="letter-spacing:-.33px">System.IO.Stream {Microso...</span></div>
<div class="r d1"><svg class="e"><use href="#ac"/></svg><svg class="w"><use href="#wr"/></svg><span class="n">BodyReader</span><span class="v" style="letter-spacing:-.12px">{Microsoft.AspNetCore.Server.Kestrel.Core.Internal.Http.HttpRequestPipeReader}</span><span class="t" style="letter-spacing:-.3px">System.IO.Pipelines.PipeRe...</span></div>
<div class="r d1"><svg class="w"><use href="#wr"/></svg><span class="n">ContentLength</span><span class="v">null</span><span class="t">long?</span></div>
<div class="r d1"><svg class="w"><use href="#wr"/></svg><span class="n">ContentType</span><span class="v">null</span><span class="t">string</span></div>
<div class="r d1"><svg class="e"><use href="#ac"/></svg><svg class="w"><use href="#wr"/></svg><span class="n">Cookies</span><span class="v">{Microsoft.AspNetCore.Http.RequestCookieCollection}</span><span class="t">Microsoft.AspNetCore.Htt...</span></div>
<div class="r d1"><svg class="e"><use href="#ac"/></svg><svg class="w"><use href="#wr"/></svg><span class="n">Form</span><span class="v">'((Microsoft.AspNetCore.Http.DefaultHttpRequest)Request).Form' threw an exception of type 'System.Inv...</span><span class="t">Microsoft.AspNetCore.Htt...</span></div>
<div class="r d1"><svg class="w"><use href="#wr"/></svg><span class="n" style="letter-spacing:-.1px">HasFormContentType</span><span class="v">false</span><span class="t">bool</span></div>
<div class="r d1 sel"><svg class="e"><use href="#ae"/></svg><svg class="w"><use href="#wr"/></svg><span class="n">Headers</span><span class="v" style="letter-spacing:-.1px">{Microsoft.AspNetCore.Server.Kestrel.Core.Internal.Http.HttpRequestHeaders}</span><span class="t">Microsoft.AspNetCore.Htt...</span></div>
<div class="r d2"><svg class="w"><use href="#wr"/></svg><span class="n">ContentLength</span><span class="v">null</span><span class="t">long?</span></div>
<div class="r d2"><svg class="w"><use href="#wr"/></svg><span class="n">Count</span><span class="v">11</span><span class="t">int</span></div>
<div class="r d2"><svg class="w"><use href="#wr"/></svg><span class="n">HasConnection</span><span class="v">true</span><span class="t">bool</span></div>
<div class="r d2"><svg class="w"><use href="#wr"/></svg><span class="n">HasTransferEncoding</span><span class="v">false</span><span class="t">bool</span></div>
<div class="r d2"><svg class="e"><use href="#ac"/></svg><svg class="w"><use href="#wr"/></svg><span class="n">HeaderAccept</span><span class="v" style="letter-spacing:.27px">{text/html,application/xhtml+xml,application/xml;q=0.9,image/webp,*/*;q=0.8}</span><span class="t">Microsoft.Extensions.Primi...</span></div>
<div class="r d2"><svg class="e"><use href="#ac"/></svg><svg class="w"><use href="#wr"/></svg><span class="n">HeaderAcceptCharset</span><span class="v">{}</span><span class="t">Microsoft.Extensions.Primi...</span></div>
<div class="r d2"><svg class="e"><use href="#ac"/></svg><svg class="w"><use href="#wr"/></svg><span class="n">HeaderAcceptEncoding</span><span class="v">{gzip, deflate}</span><span class="t">Microsoft.Extensions.Primi...</span></div>
<div class="r d2"><svg class="e"><use href="#ac"/></svg><svg class="w"><use href="#wr"/></svg><span class="n">HeaderAcceptLanguage</span><span class="v" style="letter-spacing:-.2px">{en-US,en;q=0.5}</span><span class="t">Microsoft.Extensions.Primi...</span></div>
<div class="r d2"><svg class="e"><use href="#ac"/></svg><svg class="w"><use href="#wr"/></svg><span class="n lg">HeaderAccessControlRequ...</span><span class="v">{}</span><span class="t">Microsoft.Extensions.Primi...</span></div>
<div class="r d2"><svg class="e"><use href="#ac"/></svg><svg class="w"><use href="#wr"/></svg><span class="n lg">HeaderAccessControlRequ...</span><span class="v">{}</span><span class="t">Microsoft.Extensions.Primi...</span></div>
<div class="r d2"><svg class="e"><use href="#ac"/></svg><svg class="w"><use href="#wr"/></svg><span class="n">HeaderAllow</span><span class="v">{}</span><span class="t">Microsoft.Extensions.Primi...</span></div>
<div class="r d2"><svg class="e"><use href="#ac"/></svg><svg class="w"><use href="#wr"/></svg><span class="n">HeaderAuthorization</span><span class="v">{}</span><span class="t">Microsoft.Extensions.Primi...</span></div>
<div class="r d2"><svg class="e"><use href="#ac"/></svg><svg class="w"><use href="#wr"/></svg><span class="n">HeaderCacheControl</span><span class="v" style="letter-spacing:.2px">{max-age=0}</span><span class="t">Microsoft.Extensions.Primi...</span></div>
<div class="r d2"><svg class="e"><use href="#ac"/></svg><svg class="w"><use href="#wr"/></svg><span class="n">HeaderConnection</span><span class="v">{keep-alive}</span><span class="t">Microsoft.Extensions.Primi...</span></div>
<div class="r d2"><svg class="e"><use href="#ac"/></svg><svg class="w"><use href="#wr"/></svg><span class="n">HeaderContentEncoding</span><span class="v">{}</span><span class="t">Microsoft.Extensions.Primi...</span></div>
<div class="r d2"><svg class="e"><use href="#ac"/></svg><svg class="w"><use href="#wr"/></svg><span class="n">HeaderContentLanguage</span><span class="v">{}</span><span class="t">Microsoft.Extensions.Primi...</span></div>
<div class="r d2"><svg class="e"><use href="#ac"/></svg><svg class="w"><use href="#wr"/></svg><span class="n">HeaderContentLength</span><span class="v">{}</span><span class="t">Microsoft.Extensions.Primi...</span></div>
<div class="r d2"><svg class="e"><use href="#ac"/></svg><svg class="w"><use href="#wr"/></svg><span class="n">HeaderContentLocation</span><span class="v">{}</span><span class="t">Microsoft.Extensions.Primi...</span></div>
<div class="r d2"><svg class="e"><use href="#ac"/></svg><svg class="w"><use href="#wr"/></svg><span class="n">HeaderContentMD5</span><span class="v">{}</span><span class="t">Microsoft.Extensions.Primi...</span></div>
<div class="r d2"><svg class="e"><use href="#ac"/></svg><svg class="w"><use href="#wr"/></svg><span class="n">HeaderContentRange</span><span class="v">{}</span><span class="t">Microsoft.Extensions.Primi...</span></div>
<div class="r d2"><svg class="e"><use href="#ac"/></svg><svg class="w"><use href="#wr"/></svg><span class="n">HeaderContentType</span><span class="v">{}</span><span class="t">Microsoft.Extensions.Primi...</span></div>
<div class="r d2"><svg class="e"><use href="#ac"/></svg><svg class="w"><use href="#wr"/></svg><span class="n">HeaderCookie</span><span class="v" style="letter-spacing:-.43px">{_ym_uid=1587675413400219773; _ym_d=1587675413}</span><span class="t">Microsoft.Extensions.Primi...</span></div>
<div class="r d2"><svg class="e"><use href="#ac"/></svg><svg class="w"><use href="#wr"/></svg><span class="n">HeaderCorrelationContext</span><span class="v">{}</span><span class="t">Microsoft.Extensions.Primi...</span></div>
<div class="r d2"><svg class="e"><use href="#ac"/></svg><svg class="w"><use href="#wr"/></svg><span class="n">HeaderDNT</span><span class="v">{}</span><span class="t">Microsoft.Extensions.Primi...</span></div>
<div class="r d2"><svg class="e"><use href="#ac"/></svg><svg class="w"><use href="#wr"/></svg><span class="n">HeaderDate</span><span class="v">{}</span><span class="t">Microsoft.Extensions.Primi...</span></div>
<div class="r d2"><svg class="e"><use href="#ac"/></svg><svg class="w"><use href="#cb"/></svg><span class="n">[More]</span></div>
<div class="r d1"><svg class="e"><use href="#ae"/></svg><svg class="w"><use href="#wr"/></svg><span class="n">Host</span><span class="v">{test.votpusk.ru}</span><span class="t">Microsoft.AspNetCore.Htt...</span></div>
<div class="r d2"><svg class="w"><use href="#wr"/></svg><span class="n">HasValue</span><span class="v">true</span><span class="t">bool</span></div>
<div class="r d2"><svg class="w"><use href="#wr"/></svg><span class="n">Host</span><span class="v">"test.votpusk.ru"</span><svg class="m"><use href="#mg"/></svg><span class="t">string</span></div>
<div class="r d2"><svg class="w"><use href="#wr"/></svg><span class="n">Port</span><span class="v">null</span><span class="t">int?</span></div>
<div class="r d2"><svg class="w"><use href="#wr"/></svg><span class="n">Value</span><span class="v">"test.votpusk.ru"</span><svg class="m"><use href="#mg"/></svg><span class="t">string</span></div>
<div class="r d2"><svg class="e"><use href="#ac"/></svg><svg class="w"><use href="#cb"/></svg><span class="n">Non-Public members</span></div>
<div class="r d1"><svg class="e"><use href="#ac"/></svg><svg class="w"><use href="#wr"/></svg><span class="n">HttpContext</span><span class="v" style="letter-spacing:.11px">{Microsoft.AspNetCore.Http.DefaultHttpContext}</span><span class="t">Microsoft.AspNetCore.Htt...</span></div>
<div class="r d1"><svg class="w"><use href="#wr"/></svg><span class="n">IsHttps</span><span class="v">false</span><span class="t">bool</span></div>
<div class="r d1"><svg class="w"><use href="#wr"/></svg><span class="n">Method</span><span class="v">"GET"</span><svg class="m"><use href="#mg"/></svg><span class="t">string</span></div>
<div class="r d1"><svg class="e"><use href="#ac"/></svg><svg class="w"><use href="#wr"/></svg><span class="n">Path</span><span class="v" style="letter-spacing:.15px">{/GraphHoper/index}</span><span class="t">Microsoft.AspNetCore.Htt...</span></div>
<div class="r d1"><svg class="e"><use href="#ac"/></svg><svg class="w"><use href="#wr"/></svg><span class="n">PathBase</span><span class="v">{}</span><span class="t">Microsoft.AspNetCore.Htt...</span></div>
<div class="r d1"><svg class="w"><use href="#wr"/></svg><span class="n">Protocol</span><span class="v">"HTTP/1.1"</span><svg class="m"><use href="#mg"/></svg><span class="t">string</span></div>
<div class="b" style="left:222px;top:0;width:1px;height:798px;background:#a0a0a0"></div>
<div class="b" style="left:792px;top:0;width:1px;height:798px;background:#a0a0a0"></div>
</div>
<div class="b" style="left:518px;top:408px;width:10px;height:16px;box-sizing:border-box;border:1px dotted #000;border-right:0"></div>

<div class="btn" style="left:1291px;top:1084px;width:100px;height:23px;line-height:21px">Close</div>
<div class="btn" style="left:1397px;top:1084px;width:100px;height:23px;line-height:21px">Help</div>
<svg class="b" style="left:1498px;top:1110px" width="12" height="12"><path d="M11 1L1 11M11 4l-7 7M11 7l-4 4" stroke="#999"/></svg>
<svg class="b" style="left:935px;top:189px" width="13" height="20"><path d="M1 1v15l3.500-3 2.500 6 2.500-1-2.500-5.500H11z" fill="#fff" stroke="#222"/></svg>

<div class="a" style="left:1296px;top:1060px;font-size:19.500px;line-height:26px;color:rgba(140,140,140,.75)">Activate Windows</div>
<div class="a" style="left:1295px;top:1087px;font-size:14.700px;line-height:16px;color:rgba(140,140,140,.75)">Go to Settings to activate Windows.</div>
</body></html>
